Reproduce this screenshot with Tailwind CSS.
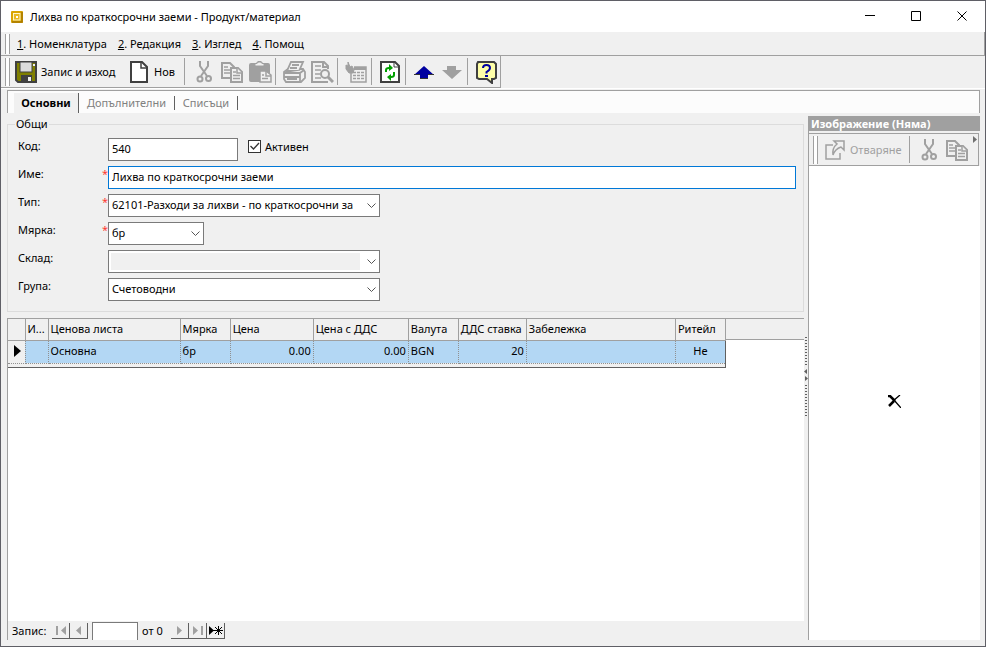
<!DOCTYPE html>
<html lang="bg">
<head>
  <meta charset="UTF-8">
  <meta name="viewport" content="width=device-width, initial-scale=1.0">
  <title>Лихва по краткосрочни заеми - Продукт/материал</title>
  <script src="https://cdn.jsdelivr.net/npm/@tailwindcss/browser@4"></script>
</head>
<body class="bg-[#f0f0f0] font-['Noto_Sans','Open_Sans',sans-serif] text-[11px] leading-4 text-black">

  <!-- Shared icons -->
  <svg class="hidden">
    <symbol id="icon-cut" viewBox="0 0 24 24">
      <g fill="none" stroke="#a0a0a0" stroke-width="2">
        <path d="M8 1v5l7 10M16 1v5L9 16"/>
        <circle cx="8" cy="19" r="2.500"/><circle cx="16.500" cy="18.500" r="2.500"/>
      </g>
    </symbol>
    <symbol id="icon-copy" viewBox="0 0 24 24">
      <g fill="#f0f0f0" stroke="#a0a0a0" stroke-width="2">
        <path d="M2 3h8l4 4v11H2z"/><path d="M4 7h4M4 10h6M4 13h6" stroke-width="1.500"/>
        <path d="M11 8h7l4 4v10H11z"/><path d="M17 8v5h5M13 12h3M13 15.500h7M13 18.500h7" stroke-width="1.500"/>
      </g>
    </symbol>
    <symbol id="chevron" viewBox="0 0 9 6">
      <path d="M.5.5l4 4 4-4" fill="none" stroke="#555"/>
    </symbol>
  </svg>

  <div class="flex min-h-screen flex-col border border-[#5f5f66]">

    <!-- Title bar -->
    <header class="flex h-[31px] items-center bg-white pl-[10px]">
      <svg class="mr-[7px] h-3 w-3" viewBox="0 0 12 12">
        <rect width="12" height="12" rx="1" fill="#d9a400"/><path d="M11 1v10H1" fill="none" stroke="#a87800" stroke-width="1.500"/>
        <rect x="2.500" y="2.500" width="6.500" height="6.500" fill="#e8b820" stroke="#fff6c8"/><rect x="5" y="5" width="2" height="2" fill="#fff"/>
      </svg>
      <h1 class="flex-1 truncate">Лихва по краткосрочни заеми - Продукт/материал</h1>
      <button class="flex h-full w-[45px] items-center justify-center" aria-label="Minimize">
        <svg class="h-[11px] w-[11px]" viewBox="0 0 11 11"><path d="M0 4.500h10" stroke="#000"/></svg>
      </button>
      <button class="flex h-full w-[46px] items-center justify-center" aria-label="Maximize">
        <svg class="h-[11px] w-[11px]" viewBox="0 0 11 11"><path d="M.5.5h9v9h-9z" fill="none" stroke="#000"/></svg>
      </button>
      <button class="flex h-full w-[46px] items-center justify-center" aria-label="Close">
        <svg class="h-[11px] w-[11px]" viewBox="0 0 11 11"><path d="M.5.5l9 9M9.500.5l-9 9" stroke="#000"/></svg>
      </button>
    </header>

    <!-- Menu -->
    <nav class="flex h-6 items-center gap-[11px] border-r border-b border-[#a0a0a0] pl-1">
      <div class="mr-[-4px] h-5 w-[5px] border-x border-[#a0a0a0] bg-white"></div>
      <a href="#"><u>1</u>. Номенклатура</a>
      <a href="#"><u>2</u>. Редакция</a>
      <a href="#"><u>3</u>. Изглед</a>
      <a href="#"><u>4</u>. Помощ</a>
    </nav>

    <!-- Toolbar -->
    <div class="flex h-8 items-center self-start border-r border-b border-[#a0a0a0] pl-1">
      <div class="h-7 w-[5px] border-x border-[#a0a0a0] bg-white"></div>
      <button class="ml-[5px] flex w-[112px] items-center gap-1 whitespace-nowrap">
        <svg class="h-[22px] w-[22px] shrink-0" viewBox="0 0 22 22">
          <path d="M1 1h20v20H3l-2-2z" fill="#808000" stroke="#404040" stroke-width="2"/>
          <rect x="5" y="1" width="12" height="10" fill="#dcdcdc" stroke="#404040"/>
          <rect x="6" y="14" width="11" height="7" fill="#404040"/><rect x="13" y="16" width="3" height="4" fill="#f0f0f0"/>
          <rect x="18" y="3" width="2" height="2" fill="#f0f0f0"/>
        </svg>
        Запис и изход
      </button>
      <button class="flex w-[56px] items-center gap-1 pl-[3px]">
        <svg class="h-[22px] w-5 shrink-0" viewBox="0 0 20 22">
          <path d="M1 1h11l5 5v15H1z" fill="#fff" stroke="#404040" stroke-width="2"/><path d="M11 1v6h6" fill="none" stroke="#404040" stroke-width="1.500"/>
        </svg>
        Нов
      </button>
      <div class="mr-[5px] ml-px h-[27px] w-px bg-[#a0a0a0]"></div>
      <button class="flex w-7 justify-center" aria-label="Cut"><svg class="h-6 w-6"><use href="#icon-cut"/></svg></button>
      <button class="flex w-7 justify-center" aria-label="Copy"><svg class="h-6 w-6"><use href="#icon-copy"/></svg></button>
      <button class="flex w-7 justify-center" aria-label="Paste">
        <svg class="h-6 w-6" viewBox="0 0 24 24">
          <path d="M3 3h5l2-2h3l2 2h5q2 0 2 2v15q0 2-2 2H3q-2 0-2-2V5q0-2 2-2z" fill="#a0a0a0"/>
          <path d="M7 3.500h2L10.500 2h2L14 3.500h2V6H7z" fill="#f0f0f0" stroke="#a0a0a0"/>
          <path d="M12 11h6l5 4v7H12z" fill="#f0f0f0" stroke="#a0a0a0" stroke-width="1.500"/>
          <path d="M18 11v5h5M14 15h2M14 18.500h6" fill="none" stroke="#a0a0a0" stroke-width="1.500"/>
        </svg>
      </button>
      <div class="mr-1 ml-px h-[27px] w-px bg-[#a0a0a0]"></div>
      <button class="flex w-7 justify-center" aria-label="Print">
        <svg class="h-6 w-6" viewBox="0 0 24 24" fill="#f0f0f0" stroke="#a0a0a0" stroke-width="1.800">
          <path d="M2 12l4-3h15l2 3v6l-4 4H4l-2-3z"/><path d="M9 2h12l-4 9H5z"/>
          <path d="M10 5h7M8 8h7M2 13h16l4-3M18 13v8M2 17h16M5 19h10"/>
        </svg>
      </button>
      <button class="flex w-7 justify-center" aria-label="Preview">
        <svg class="h-6 w-6" viewBox="0 0 24 24" fill="none" stroke="#a0a0a0" stroke-width="2">
          <path d="M18 9V6l-4-4H2v20h16M13 2v5h5"/><path d="M5 6h6M5 10h6M5 14h5M5 18h6" stroke-width="1.500"/>
          <circle cx="15" cy="14" r="4" fill="#f0f0f0"/><path d="M18 17l5 5" stroke-width="3"/>
        </svg>
      </button>
      <div class="mr-1 ml-px h-[27px] w-px bg-[#a0a0a0]"></div>
      <button class="flex w-7 justify-center" aria-label="Table">
        <svg class="h-6 w-6" viewBox="0 0 24 24" fill="none" stroke="#a0a0a0" stroke-width="1.500">
          <path d="M7 13v9h15V7H10"/><path d="M10 8.500h12" stroke-width="3"/>
          <path d="M9 12.500h11M9 15.500h11M9 18.500h11" stroke-dasharray="3 1"/>
          <path d="M2 5l2 1V2l2 5 2-1 2 4-1 3H5L2 9z" fill="#a0a0a0" stroke-width="1"/>
        </svg>
      </button>
      <div class="mr-1 ml-px h-[27px] w-px bg-[#a0a0a0]"></div>
      <button class="flex w-7 justify-center" aria-label="Refresh">
        <svg class="h-6 w-6" viewBox="0 0 24 24">
          <path d="M3 2h14l4 4v16H3z" fill="#fff" stroke="#404040" stroke-width="2"/><path d="M16 2v5h5" fill="none" stroke="#404040"/>
          <path d="M8 12V10q0-2 3-2h1M16 12v3q0 2-3 2h-1" fill="none" stroke="#00a000" stroke-width="2"/>
          <path d="M11 4l4 4-4 3zM13 14l-4 3 4 4z" fill="#00a000"/>
        </svg>
      </button>
      <div class="mr-1 ml-px h-[27px] w-px bg-[#a0a0a0]"></div>
      <button class="flex w-7 justify-center" aria-label="Previous">
        <svg class="h-6 w-6" viewBox="0 0 24 24"><path d="M12 6l10 9h-6v4H8v-4H2z" fill="#0000a0"/><path d="M2 14.500h6M16 14.500h6M8 18.500h8" stroke="#333"/></svg>
      </button>
      <button class="flex w-7 justify-center" aria-label="Next">
        <svg class="h-6 w-6" viewBox="0 0 24 24"><path d="M12 19L2 10h5V6h9v4h6z" fill="#a0a0a0"/></svg>
      </button>
      <div class="mr-1 ml-px h-[27px] w-px bg-[#a0a0a0]"></div>
      <button class="flex w-7 justify-center" aria-label="Help">
        <svg class="h-6 w-6" viewBox="0 0 24 24">
          <path d="M4 2h16l2 2v14l-2 1h-2v4l-5-4H5l-2-1V4z" fill="#ffffa8" stroke="#404040" stroke-width="2"/>
          <path d="M9 8q0-3 3.500-3T16 8q0 2-3.500 4v1.500" fill="none" stroke="#0000a0" stroke-width="2"/><rect x="11" y="15" width="3" height="2" fill="#0000a0"/>
        </svg>
      </button>
    </div>
    <div class="h-px bg-white"></div>

    <!-- Tabs -->
    <div class="mr-[5px] ml-[6px] mt-px flex h-[23px] items-end border-x border-t border-[#a0a0a0] bg-[#fcfcfc] pl-[6px]">
      <button class="h-5 w-[65px] border-r border-[#606060] bg-[#f0f0f0] font-bold">Основни</button>
      <button class="flex h-5 w-24 items-center justify-center text-[#808080]"><span class="h-[14px] w-full border-r border-[#606060] leading-[14px]">Допълнителни</span></button>
      <button class="flex h-5 w-[63px] items-center justify-center text-[#808080]"><span class="h-[14px] w-full border-r border-[#606060] leading-[14px]">Списъци</span></button>
    </div>

    <div class="flex flex-1 pr-[5px] pb-[6px] pl-[6px]">

      <!-- Left side: form and price grid -->
      <main class="flex min-w-0 flex-1 flex-col pt-[3px]">
        <fieldset class="h-[196px] border border-[#dcdcdc] pr-[7px] pl-[10px]">
          <legend class="ml-[-3px] px-px">Общи</legend>
          <div class="mt-[6px] flex flex-col gap-[5px]">
            <div class="flex h-[23px]">
              <label for="code" class="w-[90px]">Код:</label>
              <input id="code" value="540" class="h-[23px] w-[130px] border border-[#7a7a7a] bg-white px-[3px] pb-[2px]">
              <label class="ml-[10px] flex h-[17px] items-center gap-1">
                <span class="relative flex">
                  <input type="checkbox" checked class="h-[13px] w-[13px] appearance-none border border-[#333] bg-white">
                  <svg class="absolute inset-0 h-[13px] w-[13px]" viewBox="0 0 13 13"><path d="M2.500 6l3 3 5.500-6" fill="none" stroke="#333" stroke-width="1.300"/></svg>
                </span>
                Активен
              </label>
            </div>
            <div class="flex h-[23px]">
              <label for="name" class="flex w-[90px] justify-between">Име: <span class="text-[#ff3b30]">*</span></label>
              <input id="name" value="Лихва по краткосрочни заеми" class="h-[23px] min-w-0 flex-1 border border-[#0078d7] bg-white px-[3px] pb-[2px]">
            </div>
            <div class="flex h-[23px]">
              <label for="type" class="flex w-[90px] justify-between">Тип: <span class="text-[#ff3b30]">*</span></label>
              <div class="relative h-[23px] w-[272px]">
                <select id="type" class="h-full w-full appearance-none border border-[#7a7a7a] bg-white pr-[18px] pb-[2px] pl-[3px]"><option>62101-Разходи за лихви - по краткосрочни за</option></select>
                <svg class="pointer-events-none absolute top-[9px] right-1 h-[6px] w-[9px]"><use href="#chevron"/></svg>
              </div>
            </div>
            <div class="flex h-[23px]">
              <label for="unit" class="flex w-[90px] justify-between">Мярка: <span class="text-[#ff3b30]">*</span></label>
              <div class="relative h-[23px] w-24">
                <select id="unit" class="h-full w-full appearance-none border border-[#7a7a7a] bg-white pr-[18px] pb-[2px] pl-[3px]"><option>бр</option></select>
                <svg class="pointer-events-none absolute top-[9px] right-1 h-[6px] w-[9px]"><use href="#chevron"/></svg>
              </div>
            </div>
            <div class="flex h-[23px]">
              <label for="store" class="w-[90px]">Склад:</label>
              <div class="relative h-[23px] w-[272px] border border-[#7a7a7a] bg-white py-[2px] pr-[19px] pl-[2px]">
                <select id="store" class="block h-full w-full appearance-none bg-[#f0f0f0]"><option></option></select>
                <svg class="pointer-events-none absolute top-[8px] right-[3px] h-[6px] w-[9px]"><use href="#chevron"/></svg>
              </div>
            </div>
            <div class="flex h-[23px]">
              <label for="group" class="w-[90px]">Група:</label>
              <div class="relative h-[23px] w-[272px]">
                <select id="group" class="h-full w-full appearance-none border border-[#7a7a7a] bg-white pr-[18px] pb-[2px] pl-[3px]"><option>Счетоводни</option></select>
                <svg class="pointer-events-none absolute top-[9px] right-1 h-[6px] w-[9px]"><use href="#chevron"/></svg>
              </div>
            </div>
          </div>
        </fieldset>

        <!-- Price list -->
        <section class="mt-[6px] flex flex-1 flex-col border-t border-l border-[#a0a0a0] bg-white">
          <div class="bg-linear-to-b from-[#f0f0f0] from-[20px] to-transparent to-[20px]">
            <div class="relative">
              <div class="absolute top-5 right-0 left-0 h-px bg-[#a0a0a0]"></div>
              <table class="relative w-[718px] table-fixed border-r border-b border-[#606060] text-left">
                <colgroup>
                  <col class="w-[17px]"><col class="w-[23px]"><col class="w-[132px]"><col class="w-[50px]"><col class="w-[83px]">
                  <col class="w-[95px]"><col class="w-[50px]"><col class="w-[68px]"><col class="w-[149px]"><col class="w-[50px]">
                </colgroup>
                <thead class="bg-[#f0f0f0]">
                  <tr class="h-[21px] whitespace-nowrap [&>th]:border-r [&>th]:border-b [&>th]:border-[#a0a0a0] [&>th]:px-[2px] [&>th]:font-normal">
                    <th></th><th>И...</th><th>Ценова листа</th><th>Мярка</th><th>Цена</th><th>Цена с ДДС</th><th>Валута</th><th>ДДС ставка</th><th>Забележка</th><th>Ритейл</th>
                  </tr>
                </thead>
                <tbody>
                  <tr class="h-[23px] bg-[#b3d7f4] [&>td]:border-r [&>td]:border-b [&>td]:border-dotted [&>td]:border-[#909090] [&>td]:px-[2px] [&>td]:pb-[2px]">
                    <td class="bg-[#f0f0f0]"><svg class="ml-1 h-3 w-[7px]" viewBox="0 0 7 12"><path d="M0 0l7 6-7 6z"/></svg></td>
                    <td></td><td>Основна</td><td>бр</td><td class="text-right">0.00</td><td class="text-right">0.00</td><td>BGN</td><td class="text-right">20</td><td></td><td class="text-center">Не</td>
                  </tr>
                  <tr class="h-1 bg-[#f0f0f0]"><td colspan="10"></td></tr>
                </tbody>
              </table>
            </div>
          </div>
          <div class="flex-1"></div>

          <!-- Record navigator -->
          <footer class="flex h-[19px] items-center bg-[#f0f0f0] pl-1">
            <label for="record" class="w-10">Запис:</label>
            <button class="flex h-4 w-[18px] items-center justify-center border-r border-b border-[#606060]" aria-label="First"><svg class="h-[9px] w-3" viewBox="0 0 12 9"><path d="M1 0h2v9H1zM11 0v9L6 4.500z" fill="#a0a0a0"/></svg></button>
            <button class="flex h-4 w-[18px] items-center justify-center border-r border-b border-[#606060]" aria-label="Previous record"><svg class="h-[9px] w-[5px]" viewBox="0 0 5 9"><path d="M5 0v9L0 4.500z" fill="#a0a0a0"/></svg></button>
            <input id="record" class="ml-1 h-[18px] w-[46px] self-end border border-b-0 border-[#7a7a7a] bg-white">
            <span class="w-[33px] pl-1 whitespace-nowrap">от 0</span>
            <button class="flex h-4 w-[18px] items-center justify-center border-r border-b border-[#606060]" aria-label="Next record"><svg class="h-[9px] w-[5px]" viewBox="0 0 5 9"><path d="M0 0v9l5-4.500z" fill="#a0a0a0"/></svg></button>
            <button class="flex h-4 w-[18px] items-center justify-center border-r border-b border-[#606060]" aria-label="Last"><svg class="h-[9px] w-3" viewBox="0 0 12 9"><path d="M9 0h2v9H9zM1 0v9l5-4.500z" fill="#a0a0a0"/></svg></button>
            <button class="flex h-4 w-[18px] items-center justify-center border-r border-b border-[#606060]" aria-label="New record"><svg class="h-[11px] w-4" viewBox="0 0 16 11"><path d="M1 1v9l5-4.500z"/><path d="M5 5.500h10M10.500 1v9M7 2l7 7M14 2L7 9" stroke="#000"/></svg></button>
          </footer>
        </section>
      </main>

      <!-- Splitter -->
      <div class="flex w-1 flex-col items-center justify-center gap-1">
        <div class="h-7 w-[2px] bg-[repeating-linear-gradient(#606060_0_1px,transparent_1px_3px)]"></div>
        <svg class="h-3 w-1" viewBox="0 0 4 12"><path d="M3 0v5L0 2.500zM1 7v5l3-2.500z" fill="#606060"/></svg>
        <div class="h-8 w-[2px] bg-[repeating-linear-gradient(#606060_0_1px,transparent_1px_3px)]"></div>
      </div>

      <!-- Right side: image -->
      <aside class="flex w-[172px] flex-col pt-[3px]">
        <h2 class="h-[15px] bg-[#a0a0a0] pl-[3px] leading-[15px] font-bold text-white">Изображение (Няма)</h2>
        <div class="flex flex-1 flex-col border-l border-[#a0a0a0] bg-white">
          <div class="border-r border-[#f0f0f0] bg-[#f0f0f0] pt-[2px]">
            <div class="relative flex h-[33px] items-center border-y border-r border-[#a0a0a0] pl-1">
              <div class="h-7 w-[5px] border-x border-[#a0a0a0] bg-white"></div>
              <button class="ml-1 flex w-[87px] items-center gap-1 text-[#a0a0a0]">
                <svg class="ml-[2px] h-[22px] w-[22px] shrink-0" viewBox="0 0 22 22" fill="none" stroke="#a0a0a0" stroke-width="1.500"><path d="M9 6H2v14h14v-6M10 2h10v9l-3-3q-6 2-8 8-1-7 4-11z"/></svg>
                Отваряне
              </button>
              <div class="mr-[5px] h-[27px] w-px bg-[#a0a0a0]"></div>
              <button class="flex w-7 justify-center" aria-label="Cut"><svg class="h-6 w-6"><use href="#icon-cut"/></svg></button>
              <button class="flex w-7 justify-center" aria-label="Copy"><svg class="h-6 w-6"><use href="#icon-copy"/></svg></button>
              <svg class="absolute top-[2px] right-px h-[7px] w-1" viewBox="0 0 4 7"><path d="M0 0l4 3.500L0 7z" fill="#707070"/></svg>
            </div>
          </div>
          <div class="flex flex-1 items-center justify-center pb-1">
            <svg class="h-[13px] w-[13px]" viewBox="0 0 13 13" fill="none" stroke="#000"><path d="M0 1l2 0 5 5M1 11l5-5" stroke-width="2.500"/><path d="M5 6l7-6M6 5l7 8" stroke-width="1.300"/></svg>
          </div>
        </div>
      </aside>
    </div>
  </div>

</body>
</html>
